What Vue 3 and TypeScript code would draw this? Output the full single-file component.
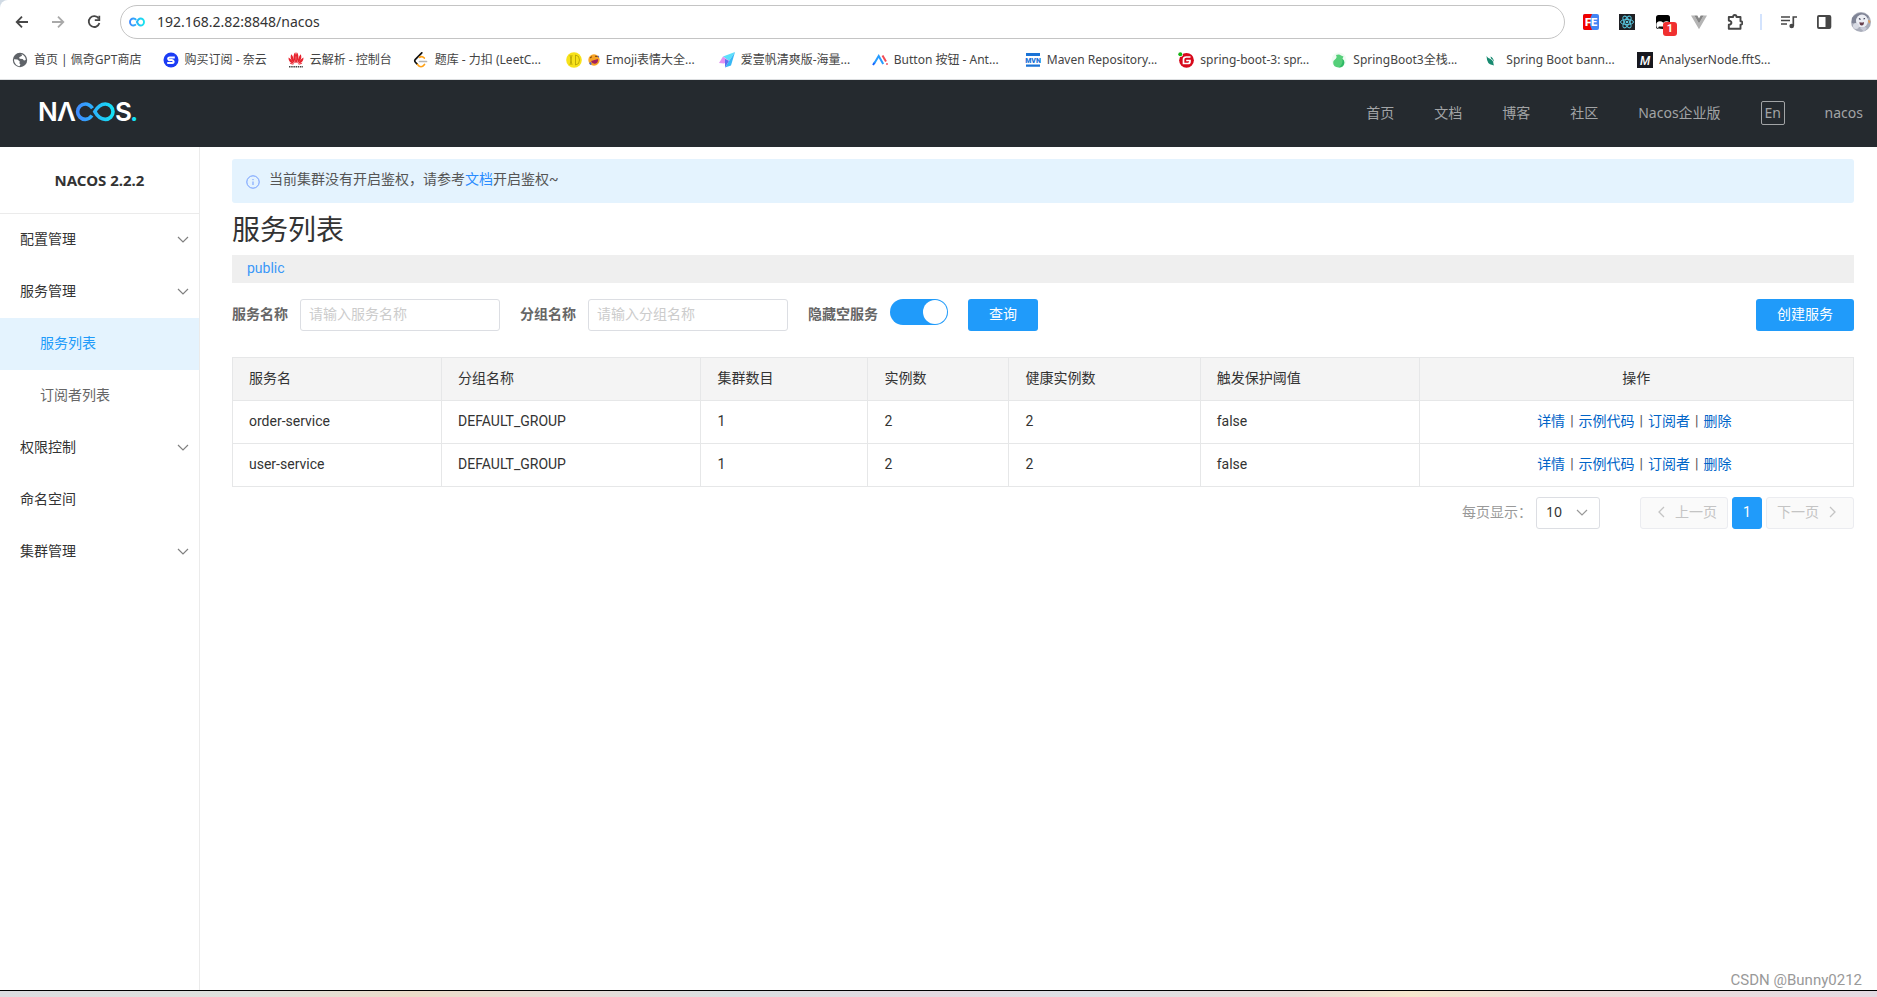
<script setup lang="ts">
import { ref } from 'vue'

interface Bookmark { icon: string; text: string; emoji?: boolean }
interface MenuItem { text: string; group?: boolean; child?: boolean; active?: boolean }
interface Service { name: string; group: string; clusters: number; instances: number; healthy: number; protect: string }

const address = ref('192.168.2.82:8848/nacos')
const serviceName = ref('')
const groupName = ref('')
const hideEmpty = ref(true)
const pageSize = ref('10')

const bookmarks: Bookmark[] = [
  { icon: 'globe', text: '首页 | 佩奇GPT商店' },
  { icon: 'blue', text: '购买订阅 - 奈云' },
  { icon: 'huawei', text: '云解析 - 控制台' },
  { icon: 'leetcode', text: '题库 - 力扣 (LeetC...' },
  { icon: 'xd', text: 'Emoji表情大全...', emoji: true },
  { icon: 'sail', text: '爱壹帆清爽版-海量...' },
  { icon: 'ant', text: 'Button 按钮 - Ant...' },
  { icon: 'mvn', text: 'Maven Repository...' },
  { icon: 'gitee', text: 'spring-boot-3: spr...' },
  { icon: 'pear', text: 'SpringBoot3全栈...' },
  { icon: 'leaf', text: 'Spring Boot bann...' },
  { icon: 'mdn', text: 'AnalyserNode.fftS...' }
]

const navLinks: string[] = ['首页', '文档', '博客', '社区', 'Nacos企业版']

const menu: MenuItem[] = [
  { text: '配置管理', group: true },
  { text: '服务管理', group: true },
  { text: '服务列表', child: true, active: true },
  { text: '订阅者列表', child: true },
  { text: '权限控制', group: true },
  { text: '命名空间' },
  { text: '集群管理', group: true }
]

const columns: string[] = ['服务名', '分组名称', '集群数目', '实例数', '健康实例数', '触发保护阈值', '操作']
const actions: string[] = ['详情', '示例代码', '订阅者', '删除']
const services: Service[] = [
  { name: 'order-service', group: 'DEFAULT_GROUP', clusters: 1, instances: 2, healthy: 2, protect: 'false' },
  { name: 'user-service', group: 'DEFAULT_GROUP', clusters: 1, instances: 2, healthy: 2, protect: 'false' }
]
</script>

<template>
  <div class="window">
    <div class="browser">
      <div class="toolbar">
        <div class="history">
          <button type="button" aria-label="后退">
            <svg width="16" height="16" viewBox="0 0 16 16" fill="none" stroke="#474747" stroke-width="1.8"><path d="M14 8H3M8 2.7 2.7 8 8 13.3" /></svg>
          </button>
          <button type="button" aria-label="前进" disabled>
            <svg width="16" height="16" viewBox="0 0 16 16" fill="none" stroke="#a9a9a9" stroke-width="1.8"><path d="M2 8h11M8 2.7 13.3 8 8 13.3" /></svg>
          </button>
          <button type="button" aria-label="刷新">
            <svg width="16" height="16" viewBox="0 0 16 16" fill="none" stroke="#474747" stroke-width="1.8"><path d="M12.7 4.6A5.4 5.4 0 1 0 13.4 9" /><path d="M13.3 1.8v4.4H8.8" /></svg>
          </button>
        </div>
        <label class="omnibox">
          <svg width="16" height="10" viewBox="0 0 16 10" fill="none" stroke-width="1.9">
            <defs><linearGradient id="fav" x1="0" x2="1"><stop offset="0" stop-color="#3d8bff" /><stop offset="1" stop-color="#17e3ee" /></linearGradient></defs>
            <path stroke="url(#fav)" d="M7 7.4C6.2 8.2 5.4 8.500 4.500 8.500a3.500 3.500 0 1 1 0-7c1.100 0 2 .5 2.700 1.400M11.500 1.500a3.500 3.500 0 1 1 0 7c-1.800 0-2.600-1.400-3.600-3.500.9-2 1.800-3.500 3.600-3.500z" />
          </svg>
          <input v-model="address" type="text" aria-label="地址栏" />
        </label>
        <div class="extensions">
          <button type="button" aria-label="FeHelper">
            <svg width="16" height="16" viewBox="0 0 16 16"><rect width="16" height="16" rx="2" fill="#4285f4" /><path d="M2 0h5v16H2a2 2 0 0 1-2-2V2a2 2 0 0 1 2-2z" fill="#f00000" /><path d="M7 0h2L7 5zM7 16h2l-2-5z" fill="#f00000" /><text x="8" y="12" text-anchor="middle" font-family="Roboto" font-weight="900" font-size="11" fill="#fff">FE</text></svg>
          </button>
          <button type="button" aria-label="React">
            <svg width="16" height="16" viewBox="0 0 16 16"><rect width="16" height="16" fill="#1f2024" /><g fill="none" stroke="#58c4dc" stroke-width="1"><ellipse cx="8" cy="8" rx="6.500" ry="2.600" /><ellipse cx="8" cy="8" rx="6.500" ry="2.600" transform="rotate(60 8 8)" /><ellipse cx="8" cy="8" rx="6.500" ry="2.600" transform="rotate(120 8 8)" /></g><circle cx="8" cy="8" r="1.300" fill="#58c4dc" /></svg>
          </button>
          <button type="button" class="monkey" aria-label="Tampermonkey">
            <svg width="16" height="16" viewBox="0 0 16 16"><rect x="1" y="1" width="14" height="14" rx="2.500" fill="#000" /><circle cx="5" cy="11" r="3.700" fill="#fff" /><circle cx="11.500" cy="11" r="3.700" fill="#fff" /><path d="M3 13.500q2 1.700 5 1v-2H4z" fill="#111" /></svg>
            <span class="badge">1</span>
          </button>
          <button type="button" aria-label="Vue">
            <svg width="16" height="16" viewBox="0 0 16 16"><path d="M0 1.500h3.300L8 9.500l4.700-8H16l-8 13.700z" fill="#b4b4b4" /><path d="M3.300 1.500h3L8 4.400l1.700-2.900h3L8 9.600z" fill="#858585" /></svg>
          </button>
          <button type="button" aria-label="扩展程序">
            <svg width="16" height="18" viewBox="1 0 16 18"><path d="M2.800 4h4.300q0-2 1.700-2t1.700 2h4v4.300q2 .1 2 1.700t-2 1.700v4.100H2.800v-4q2.600-.3 2.600-2.100T2.800 7.600z" fill="none" stroke="#474747" stroke-width="1.900" stroke-linejoin="round" /></svg>
          </button>
        </div>
        <div class="chrome-tools">
          <span class="divider"></span>
          <button type="button" aria-label="媒体控制">
            <svg width="16" height="16" viewBox="0 0 16 16" fill="none" stroke="#474747" stroke-width="1.700"><path d="M0 3h9M0 6.500h9M0 10h6M12.300 12V3H16" /><circle cx="10.700" cy="12" r="1.500" fill="#474747" /></svg>
          </button>
          <button type="button" aria-label="侧边栏">
            <svg width="16" height="16" viewBox="0 0 16 16"><rect x="1.900" y="2" width="12.500" height="12" rx="1" fill="none" stroke="#474747" stroke-width="1.800" /><path d="M9.500 2h5v12h-5z" fill="#474747" /></svg>
          </button>
          <button type="button" aria-label="用户">
            <svg width="20" height="20" viewBox="0 0 20 20"><circle cx="10" cy="10" r="10" fill="#a9adba" /><path d="M1 6q4-5 9-5t8 4l-4 4-8 3-5-1z" fill="#7f8495" /><ellipse cx="11" cy="9" rx="6" ry="6.500" fill="#eceef4" /><circle cx="5" cy="14" r="3" fill="#d8dbe4" /><path d="M8 6.500l1.500 1M12.500 7l1.500-.5" stroke="#34364a" stroke-width="1.200" /><path d="M8.500 10q2.500 1 4.500 0 0 3.500-2.300 3.500T8.500 10z" fill="#68404c" /><path d="M17 8l2.500 1-1.500 3z" fill="#ef9a4a" /><path d="M9 16q4-2 7 0l-3 3.500z" fill="#c8cbd8" /></svg>
          </button>
        </div>
      </div>

      <nav class="bookmarks" aria-label="书签">
        <a v-for="(b, i) in bookmarks" :key="b.icon" href="#" class="bookmark" :class="{ long: i > 2 }">
          <svg v-if="b.icon === 'globe'" width="16" height="16" viewBox="0 0 16 16"><circle cx="8" cy="8" r="7.200" fill="#5f6368" /><path d="M2 7.200l3.500.3 2.300 2-.4 1.800 1 1.200-.8 1.700C4.500 14 2 11 2 7.200zM7.500 2l2 .3.5 1.500-2.800 1.400.4 1.600 3 .2 1.400 1.500 1.800-.5C13.800 5 11.500 2 7.500 2z" fill="#fff" /></svg>
          <svg v-else-if="b.icon === 'blue'" width="16" height="16" viewBox="0 0 16 16"><circle cx="8" cy="8" r="7.500" fill="#1b3cf5" /><path d="M11.800 5.500H6.800q-2 0-1.600 1.500t2.500 1.100 2.800 1-1.500 2H4.200" fill="none" stroke="#fff" stroke-width="2" /></svg>
          <svg v-else-if="b.icon === 'huawei'" width="16" height="16" viewBox="0 0 16 16"><g fill="#e7232e"><path d="M7.700 11.300C5.500 8 4.500 3 7.300.3 8.300 3 8.500 7 7.700 11.300zM8.300 11.300C10.500 8 11.500 3 8.700.3 7.700 3 7.500 7 8.300 11.300z" /><path d="M6.800 11.300C3 9.200 1.700 5 3.400 2.300 5 4 6.500 8 6.800 11.300zM9.200 11.300C13 9.200 14.300 5 12.600 2.300 11 4 9.500 8 9.200 11.300z" /><path d="M6.200 11.700C2.500 11.400.2 8.800.6 5.600 3 7 5 9.500 6.200 11.700zM9.800 11.700c3.700-.3 6-2.900 5.600-6.100-2.400 1.400-4.400 3.900-5.600 6.100z" /><path d="M5.800 12.300q-3 .8-4.300-1.500 2.300.2 4.300 1.500zM10.200 12.300q3 .8 4.300-1.500-2.300.2-4.300 1.500z" /></g><path d="M1 14.700h14" stroke="#444" stroke-width="1.600" stroke-dasharray="1.500 .7" /></svg>
          <svg v-else-if="b.icon === 'leetcode'" width="16" height="16" viewBox="0 0 16 16" fill="none" stroke-width="1.700" stroke-linecap="round"><path d="M8.800.8 2.400 7.300q-1.300 1.500 0 3l1.800 1.900" stroke="#111" /><path d="M4.500 12.500q3.500 4.500 7 0M6.500 5.300q2.500-1.800 4.800.7" stroke="#ffa116" /><path d="M6.500 9.500h7" stroke="#b3b3b3" /></svg>
          <svg v-else-if="b.icon === 'xd'" width="16" height="16" viewBox="0 0 16 16"><circle cx="8" cy="8" r="7.800" fill="#f7e21a" /><path d="M4 3l2 10M6 3L4 13M9.500 3v10q4-.5 4-5t-4-5z" stroke="#a79500" stroke-width=".7" fill="none" /></svg>
          <svg v-else-if="b.icon === 'sail'" width="16" height="16" viewBox="0 0 16 16"><path d="M16 0 4 4.500 10 9z" fill="#5ce0fb" /><path d="M16 0 10 9l-4 6.500 6-2z" fill="#38b7f5" /><path d="M4 4.500 0 11l5 .5L10 9z" fill="#e391f1" /><path d="M6 7l4 2-4 6.500z" fill="#5c6ff0" /></svg>
          <svg v-else-if="b.icon === 'ant'" width="16" height="16" viewBox="0 0 16 16" fill="none" stroke-width="2"><path d="M1 13l2-3" stroke="#1460ff" /><path d="M2.500 11 6.700 4l4.500 8" stroke="#269cff" /><path d="M10.500 3.500 14 9.500" stroke="#f24a54" /><circle cx="15" cy="12" r=".6" stroke="#f24a54" stroke-width="1" /></svg>
          <svg v-else-if="b.icon === 'mvn'" width="16" height="16" viewBox="0 0 16 16"><path d="M1 1h14v3H1zM1 12.500h14v2.300H1z" fill="#1a73d6" /><text x="8" y="11" text-anchor="middle" font-family="Roboto" font-weight="900" font-size="7" fill="#1a73d6">MVN</text></svg>
          <svg v-else-if="b.icon === 'gitee'" width="16" height="16" viewBox="0 0 16 16"><circle cx="8.500" cy="8.300" r="7.400" fill="#d7091b" /><path d="M12.500 5H8.200Q5.500 5 5.500 7.500V11.500h4.500q2 0 2-2v-1H8.200" fill="none" stroke="#fff" stroke-width="1.700" /><circle cx="2.300" cy="2.300" r="2.700" fill="#fff" /><circle cx="2.300" cy="2.300" r="2" fill="#18b318" /></svg>
          <svg v-else-if="b.icon === 'pear'" width="16" height="16" viewBox="0 0 16 16"><circle cx="8" cy="8" r="7.500" fill="#f0fbf3" /><path d="M5 3q3.500-1 5 .5l2.500 1-1 2q2 2 1.800 4.500Q12.600 16 7.500 15.500T2.200 11Q2.300 8.300 5 6.500q1.300-1.200 0-3.500z" fill="#55cf79" /><path d="M11.500 7q1.900 1.500 1.800 4Q12.500 15 8 15.400q4-3 3.500-8.400z" fill="#2fb866" /></svg>
          <svg v-else-if="b.icon === 'leaf'" width="16" height="16" viewBox="0 0 16 16"><path d="M2.500 4q1 2 4 3 3 1.500 3 5l.5 1.500-1.500-.6Q3 13 2.500 4zM6.500 4.500q3 1 3.500 5.500-1.200-2.800-3-3.500z" fill="#188a70" /></svg>
          <svg v-else width="16" height="16" viewBox="0 0 16 16"><rect width="16" height="16" fill="#17181f" /><text x="8" y="12.500" text-anchor="middle" font-family="Roboto" font-style="italic" font-weight="500" font-size="12" fill="#fff">M</text></svg>
          <svg v-if="b.emoji" width="12" height="12" viewBox="0 0 12 12"><circle cx="6" cy="6" r="5.700" fill="#f7a325" /><path d="M3 7 10 5q.5 4-3 4.800Q4 10 3 7z" fill="#a2205e" /><path d="M2 4l2-1.300M7 2.200l2.500.3" stroke="#6b3a12" stroke-width="1" /><path d="M1 9l2-1 .7 2.300-1.500.7z" fill="#4a62d2" /><path d="M9.500 1l1.700 1.400-.6 1.600z" fill="#4a62d2" /></svg>
          <span>{{ b.text }}</span>
        </a>
      </nav>
    </div>

    <header class="header">
      <a href="#" class="logo" aria-label="Nacos">
        <svg width="104" height="40" viewBox="-3 -9 104 40">
          <defs><linearGradient id="loop" x1="0" x2="1"><stop offset="0" stop-color="#3f8cff" /><stop offset="1" stop-color="#14e0f5" /></linearGradient></defs>
          <g font-family="Inter, Roboto, sans-serif" font-weight="600" font-size="26" fill="#fff">
            <text x="-2" y="20">N</text>
            <text x="17" y="20">Λ</text>
            <text x="75" y="20">S</text>
            <text x="90" y="20" fill="#14e0f5">.</text>
          </g>
          <path d="M52 14.500C49.800 17.300 47.500 18.400 45.300 18.400a7.700 7.700 0 1 1 0-15.400c3 0 5.300 1.600 7.200 4.300M54.800 10.700C57.700 5.500 61 3 65.300 3a7.700 7.700 0 0 1 0 15.400c-4.300 0-7.600-2.500-10.500-7.700z" fill="none" stroke="url(#loop)" stroke-width="3.600" />
        </svg>
      </a>
      <nav class="nav">
        <a v-for="n in navLinks" :key="n" href="#">{{ n }}</a>
        <button type="button" class="lang">En</button>
        <a href="#">nacos</a>
      </nav>
    </header>

    <div class="body">
      <aside class="sidebar">
        <div class="version">NACOS 2.2.2</div>
        <nav>
          <template v-for="m in menu" :key="m.text">
            <button v-if="m.group" type="button" class="item">
              <span>{{ m.text }}</span>
              <svg width="12" height="8" viewBox="0 0 12 8" fill="none" stroke="#808080" stroke-width="1.200"><path d="M1 1l5 5 5-5" /></svg>
            </button>
            <a v-else href="#" class="item" :class="{ child: m.child, active: m.active }">{{ m.text }}</a>
          </template>
        </nav>
      </aside>

      <main class="content">
        <div class="alert">
          <svg width="14" height="14" viewBox="0 0 14 14" fill="none" stroke="#6f9bff"><circle cx="7" cy="7" r="6.200" /><path d="M7 6.500v3.500M7 4v1.200" /></svg>
          <p>当前集群没有开启鉴权，请参考<a href="#">文档</a>开启鉴权~</p>
        </div>
        <h1>服务列表</h1>
        <div class="namespace"><a href="#">public</a></div>

        <form class="filters" @submit.prevent>
          <div class="field">
            <label for="service-name">服务名称</label>
            <input id="service-name" v-model="serviceName" type="text" placeholder="请输入服务名称" />
          </div>
          <div class="field">
            <label for="group-name">分组名称</label>
            <input id="group-name" v-model="groupName" type="text" placeholder="请输入分组名称" />
          </div>
          <div class="field">
            <label for="hide-empty">隐藏空服务</label>
            <input id="hide-empty" v-model="hideEmpty" type="checkbox" class="switch" />
          </div>
          <button type="submit" class="primary">查询</button>
          <button type="button" class="primary create">创建服务</button>
        </form>

        <table>
          <colgroup>
            <col class="c-name" /><col class="c-group" /><col class="c-cluster" /><col class="c-inst" />
            <col class="c-healthy" /><col class="c-protect" /><col />
          </colgroup>
          <thead>
            <tr><th v-for="c in columns" :key="c">{{ c }}</th></tr>
          </thead>
          <tbody>
            <tr v-for="s in services" :key="s.name">
              <td>{{ s.name }}</td>
              <td>{{ s.group }}</td>
              <td>{{ s.clusters }}</td>
              <td>{{ s.instances }}</td>
              <td>{{ s.healthy }}</td>
              <td>{{ s.protect }}</td>
              <td>
                <div class="actions"><a v-for="a in actions" :key="a" href="#">{{ a }}</a></div>
              </td>
            </tr>
          </tbody>
        </table>

        <div class="pagination">
          <label for="page-size">每页显示：</label>
          <div class="select">
            <select id="page-size" v-model="pageSize"><option>10</option><option>20</option><option>50</option></select>
            <svg width="12" height="8" viewBox="0 0 12 8" fill="none" stroke="#999" stroke-width="1.200"><path d="M1 1l5 5 5-5" /></svg>
          </div>
          <div class="pages">
            <button type="button" class="prev" disabled>
              <svg width="8" height="12" viewBox="0 0 8 12" fill="none" stroke="#c4c4c4" stroke-width="1.300"><path d="M7 1 2 6l5 5" /></svg>上一页
            </button>
            <button type="button" class="current">1</button>
            <button type="button" class="next" disabled>
              下一页<svg width="8" height="12" viewBox="0 0 8 12" fill="none" stroke="#c4c4c4" stroke-width="1.300"><path d="M1 1l5 5-5 5" /></svg>
            </button>
          </div>
        </div>
      </main>
    </div>
    <div class="desktop-edge"></div>
    <div class="watermark">CSDN @Bunny0212</div>
  </div>
</template>

<style>
body {
  background: #fff;
}
</style>

<style scoped>
.window {
  position: relative;
  display: flex;
  flex-direction: column;
  min-height: 100vh;
  background: #fff;
  color: #333;
  font: 14px/20px Roboto, "Noto Sans CJK SC", sans-serif;
}
.window *,
.window *::before {
  box-sizing: border-box;
}
a {
  color: inherit;
  text-decoration: none;
}
button,
input,
select {
  margin: 0;
  padding: 0;
  border: 0;
  background: none;
  color: inherit;
  font: inherit;
}
svg {
  display: block;
  flex: none;
}

/* browser chrome */
.browser {
  border-bottom: 1px solid #dcdee0;
  border-top-left-radius: 8px;
  background: #fff;
  box-shadow: -8px -8px 0 #d0dae4;
}
.toolbar {
  display: flex;
  align-items: center;
  height: 44px;
  padding: 0 6px 0 14px;
}
.history {
  display: flex;
  gap: 20px;
  margin-right: 18px;
}
.omnibox {
  display: flex;
  flex: 1;
  align-items: center;
  gap: 12px;
  height: 34px;
  margin-right: 18px;
  padding: 0 8px;
  border: 1px solid #c4c4c4;
  border-radius: 17px;
}
.omnibox input {
  flex: 1;
  outline: 0;
  color: #333;
  font: 14px/20px "Noto Sans", sans-serif;
}
.extensions,
.chrome-tools {
  display: flex;
  align-items: center;
  gap: 20px;
}
.chrome-tools {
  gap: 19px;
  margin-left: 17px;
}
.divider {
  width: 2px;
  height: 16px;
  background: #d3e3fd;
}
.monkey {
  position: relative;
}
.badge {
  position: absolute;
  top: 8px;
  left: 8px;
  width: 14px;
  height: 14px;
  border-radius: 3px;
  background: #f03030;
  color: #fff;
  font: bold 11px/14px Roboto, sans-serif;
  text-align: center;
}
.bookmarks {
  display: flex;
  gap: 21px;
  height: 35px;
  padding: 0 12px;
  overflow: hidden;
}
.bookmark {
  display: flex;
  flex: none;
  align-items: center;
  gap: 6px;
  height: 31px;
  color: #444;
  font: 12px/18px "Noto Sans", "Noto Sans CJK SC", sans-serif;
  white-space: nowrap;
}
.bookmark.long {
  min-width: 132px;
}

/* console header */
.header {
  display: flex;
  align-items: center;
  justify-content: space-between;
  height: 67px;
  padding: 0 14px 2px 37px;
  background: #252a2f;
}
.nav {
  display: flex;
  align-items: center;
  gap: 40px;
  color: #a2a4a6;
  font-family: "Noto Sans", "Noto Sans CJK SC", sans-serif;
}
.logo {
  margin-bottom: 2px;
}
.lang {
  width: 24px;
  height: 24px;
  border: 1px solid #a2a4a6;
  border-radius: 2px;
}

/* layout */
.body {
  display: flex;
  flex: 1;
}
.sidebar {
  flex: none;
  width: 200px;
  border-right: 1px solid #ebebeb;
}
.version {
  height: 67px;
  border-bottom: 1px solid #ebebeb;
  font: bold 15px/66px "Noto Sans", sans-serif;
  text-align: center;
}
.item {
  display: flex;
  align-items: center;
  justify-content: space-between;
  width: 100%;
  height: 52px;
  padding: 0 10px 2px 20px;
}
.item svg {
  margin-top: 2px;
}
.child {
  padding-left: 40px;
  color: #666;
}
.active {
  background: #e4f3fe;
  color: #209bfa;
}
.content {
  flex: 1;
  min-width: 0;
  padding: 12px 23px 12px 32px;
}
.alert {
  display: flex;
  gap: 9px;
  height: 44px;
  padding: 10px 14px;
  border-radius: 3px;
  background: #e4f3fe;
  color: #555;
}
.alert svg {
  margin-top: 6px;
}
.alert p {
  margin: 0;
}
.alert a {
  color: #2a8cff;
}
h1 {
  margin: 10px 0 6px;
  font-size: 28px;
  font-weight: 400;
  line-height: 36px;
}
.namespace {
  height: 28px;
  padding: 0 15px;
  background: #efefef;
  color: #3a98f8;
  line-height: 26px;
}

/* filters */
.filters {
  display: flex;
  align-items: flex-start;
  gap: 20px;
  margin: 16px 0 26px;
  line-height: 30px;
}
.field {
  display: flex;
  gap: 12px;
}
.field label {
  color: #666;
  font-weight: 600;
}
.field input[type="text"] {
  width: 200px;
  height: 32px;
  padding: 0 8px 2px;
  border: 1px solid #dcdee3;
  border-radius: 3px;
}
.field input::placeholder {
  color: #ccc;
}
.switch {
  width: 58px;
  height: 26px;
  border-radius: 13px;
  background: #dcdee3;
  appearance: none;
}
.switch::before {
  display: block;
  width: 24px;
  height: 24px;
  margin: 1px;
  border-radius: 12px;
  background: #fff;
  content: "";
}
.switch:checked {
  background: #209bfa;
}
.switch:checked::before {
  margin-left: 33px;
}
.primary {
  height: 32px;
  padding: 0 21px 2px;
  border-radius: 3px;
  background: #209bfa;
  color: #fff;
}
.create {
  margin-left: auto;
}

/* table */
table {
  width: 100%;
  border-collapse: collapse;
  table-layout: fixed;
}
.c-name { width: 12.9%; }
.c-group { width: 16%; }
.c-cluster { width: 10.3%; }
.c-inst { width: 8.7%; }
.c-healthy { width: 11.8%; }
.c-protect { width: 13.5%; }
th,
td {
  height: 43px;
  padding: 0 16px 2px;
  border: 1px solid #e6e7e8;
  font-weight: 400;
  text-align: left;
}
th {
  background: #f4f4f4;
}
th:last-child {
  text-align: center;
}
.actions {
  display: flex;
  justify-content: center;
  padding-right: 4px;
  color: #0064c8;
}
.actions a + a::before {
  padding: 0 5px;
  color: #555;
  content: "|";
}

/* pagination */
.pagination {
  display: flex;
  align-items: center;
  justify-content: flex-end;
  margin-top: 10px;
}
.pagination label {
  padding: 0 4px 2px 0;
  color: #999;
}
.select {
  display: grid;
  align-items: center;
  justify-items: end;
}
.select select {
  grid-area: 1 / 1;
  width: 64px;
  height: 32px;
  padding: 0 0 2px 9px;
  border: 1px solid #dcdee3;
  border-radius: 3px;
  font-family: "Noto Sans", sans-serif;
  appearance: none;
}
.select svg {
  grid-area: 1 / 1;
  margin-right: 12px;
  pointer-events: none;
}
.pages {
  display: flex;
  gap: 4px;
  margin-left: 40px;
}
.pages button {
  display: flex;
  align-items: center;
  justify-content: center;
  gap: 10px;
  min-width: 30px;
  height: 32px;
  padding: 0 10px 2px;
  border: 1px solid #ebecf0;
  border-radius: 3px;
  background: #fafafa;
  color: #c4c4c4;
}
.pages button:disabled {
  width: 88px;
}
.pages .prev {
  justify-content: flex-end;
}
.pages .next {
  justify-content: flex-start;
}
.pages .current {
  border-color: #209bfa;
  background: #209bfa;
  color: #fff;
}

.desktop-edge {
  height: 7px;
  border-top: 1px solid #000;
  background: linear-gradient(90deg, #dcdde0, #dfe1dd 13%, #ecdcc8 22%, #e8dcd6 30%, #dadfe1 39%, #e4d9e0 50%, #dde0e5 58%, #e9dcd8 69%, #f6e7cd 75%, #eedcd8 83%, #e4dae2);
}
.watermark {
  position: absolute;
  right: 15px;
  bottom: 7px;
  color: #999;
  font-size: 15px;
  text-shadow: 1px 1px 0 #fff;
}
</style>
